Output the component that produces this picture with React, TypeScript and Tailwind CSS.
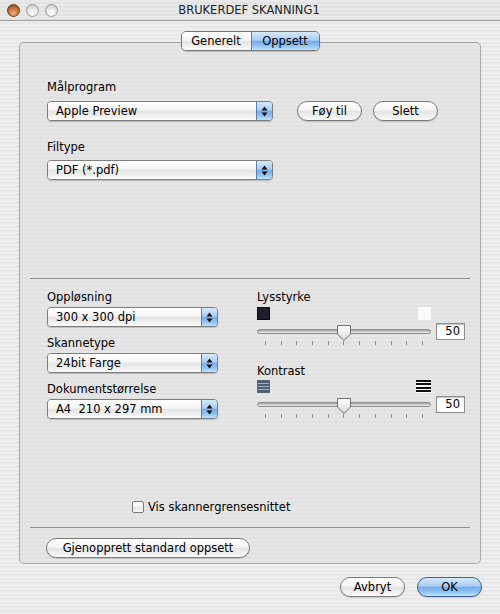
import React from 'react';

// Aqua-style gradients
const gloss = 'bg-[linear-gradient(180deg,#ffffff_0%,#f5f5f5_45%,#e4e4e4_52%,#f2f2f2_85%,#fdfdfd_100%)]';
const blue = 'bg-[linear-gradient(180deg,#d6e9fc_0%,#a9cdf3_45%,#74adee_52%,#93c6f6_80%,#c3e3fd_100%)]';

const TrafficLight = ({ red }: { red?: boolean }) => (
  <div
    className={
      red
        ? 'w-[13px] h-[13px] rounded-full border border-[#6b3a1c] bg-[radial-gradient(circle_at_50%_75%,#f0b27a_0%,#c0703a_55%,#7a3f1c_100%)]'
        : 'w-[13px] h-[13px] rounded-full border border-[#9a9a9a] bg-[radial-gradient(circle_at_50%_75%,#ffffff_0%,#e4e4e4_55%,#b9b9b9_100%)]'
    }
  />
);

const Arrows = () => (
  <svg width="7" height="11" viewBox="0 0 7 11">
    <path d="M3.5 0.5 L6.5 4.5 H0.5 Z" fill="#111" />
    <path d="M3.5 10.5 L6.5 6.5 H0.5 Z" fill="#111" />
  </svg>
);

const Popup = ({ label, width }: { label: string; width: string }) => (
  <div className={`flex h-[20px] ${width} rounded-[4px] border border-[#7d7d7d] overflow-hidden shadow-[0_1px_1px_rgba(0,0,0,0.18)]`}>
    <div className={`flex-1 ${gloss} pl-[8px] leading-[18px] whitespace-pre`}>{label}</div>
    <div className={`w-[16px] border-l border-[#5d7fab] ${blue} flex items-center justify-center`}>
      <Arrows />
    </div>
  </div>
);

const PillButton = ({ label, width, primary }: { label: string; width: string; primary?: boolean }) => (
  <div
    className={`h-[20px] ${width} rounded-full border ${
      primary ? `border-[#3d5f91] ${blue}` : `border-[#7b7b7b] ${gloss}`
    } flex items-center justify-center leading-[18px] shadow-[0_1px_1px_rgba(0,0,0,0.15)]`}
  >
    {label}
  </div>
);

const Slider = () => (
  <div className="flex items-center">
    <div className="relative w-[174px] h-[20px] flex items-center">
      <div className="w-full h-[5px] rounded-full border border-[#8f8f8f] bg-[linear-gradient(180deg,#9c9c9c_0%,#c9c9c9_50%,#ececec_100%)]" />
      <svg className="absolute left-[79px] top-[3px]" width="16" height="18" viewBox="0 0 16 18">
        <defs>
          <linearGradient id="thumb" x1="0" y1="0" x2="0" y2="1">
            <stop offset="0" stopColor="#ffffff" />
            <stop offset="0.5" stopColor="#eeeeee" />
            <stop offset="1" stopColor="#d6d6d6" />
          </linearGradient>
        </defs>
        <path d="M1.5 1.5 H14.5 V10 L8 16.5 L1.5 10 Z" fill="url(#thumb)" stroke="#707070" strokeWidth="1" />
      </svg>
    </div>
    <div className="ml-[5px] w-[29px] h-[17px] border border-[#8e8e8e] bg-white shadow-[inset_0_1px_1px_rgba(0,0,0,0.25)] text-right pr-[4px] leading-[15px]">
      50
    </div>
  </div>
);

const Ticks = () => (
  <div className="w-[174px] h-[5px] px-[8px] flex justify-between">
    {Array.from({ length: 11 }).map((_, i) => (
      <div key={i} className="w-px h-[4px] bg-[#8a8a8a]" />
    ))}
  </div>
);

export default function App() {
  return (
    <div className="w-[500px] h-[614px] flex flex-col overflow-hidden text-[11.5px] text-black font-['DejaVu_Sans','Liberation_Sans',sans-serif] bg-[repeating-linear-gradient(180deg,#eeeeee_0px,#eeeeee_2px,#e8e8e8_2px,#e8e8e8_4px)]">
      {/* title bar */}
      <div className="h-[21px] shrink-0 flex items-center border-b border-[#9d9d9d] bg-[repeating-linear-gradient(180deg,#e9e9e9_0px,#e9e9e9_2px,#e2e2e2_2px,#e2e2e2_4px)]">
        <div className="flex gap-[6px] pl-[7px]">
          <TrafficLight red />
          <TrafficLight />
          <TrafficLight />
        </div>
        <div className="flex-1 text-center pr-[60px] leading-[16px] text-[#222]">BRUKERDEF SKANNING1</div>
      </div>

      <div className="px-[19px] pt-[21px]">
        <div className="h-[522px] flex flex-col rounded-[5px] border border-[#a9a9a9] border-t-[#9f9f9f] bg-[repeating-linear-gradient(180deg,#e6e6e6_0px,#e6e6e6_2px,#e1e1e1_2px,#e1e1e1_4px)]">
          {/* tabs */}
          <div className="-mt-[12px] flex justify-center">
            <div className="flex h-[20px] rounded-[5px] border border-[#777] overflow-hidden shadow-[0_1px_1px_rgba(0,0,0,0.18)]">
              <div className={`w-[69px] ${gloss} flex items-center justify-center leading-[18px]`}>Generelt</div>
              <div className={`w-[68px] border-l border-[#5d7fab] ${blue} flex items-center justify-center leading-[18px]`}>Oppsett</div>
            </div>
          </div>

          {/* application / file type */}
          <div className="pl-[27px]">
            <div className="mt-[28px] leading-[16px]">Målprogram</div>
            <div className="mt-[6px] flex items-center">
              <Popup label="Apple Preview" width="w-[226px]" />
              <div className="ml-[24px]">
                <PillButton label="Føy til" width="w-[65px]" />
              </div>
              <div className="ml-[11px]">
                <PillButton label="Slett" width="w-[65px]" />
              </div>
            </div>
            <div className="mt-[18px] leading-[16px]">Filtype</div>
            <div className="mt-[5px]">
              <Popup label="PDF (*.pdf)" width="w-[226px]" />
            </div>
          </div>

          <div className="mt-[98px] mx-[10px] h-px bg-[#8e8e8e]" />

          {/* scan settings */}
          <div className="flex pl-[27px]">
            <div className="w-[210px]">
              <div className="mt-[10px] leading-[16px]">Oppløsning</div>
              <div className="mt-[2px]">
                <Popup label="300 x 300 dpi" width="w-[171px]" />
              </div>
              <div className="mt-[8px] leading-[16px]">Skannetype</div>
              <div className="mt-[2px]">
                <Popup label="24bit Farge" width="w-[171px]" />
              </div>
              <div className="mt-[8px] leading-[16px]">Dokumentstørrelse</div>
              <div className="mt-[2px]">
                <Popup label="A4  210 x 297 mm" width="w-[171px]" />
              </div>
            </div>

            <div>
              <div className="mt-[10px] leading-[16px]">Lysstyrke</div>
              <div className="mt-[2px] w-[174px] flex justify-between">
                <div className="w-[13px] h-[13px] bg-[#221e29] border border-[#0f0d12]" />
                <div className="w-[13px] h-[13px] bg-[#fafafa]" />
              </div>
              <div className="mt-[1px]">
                <Slider />
              </div>
              <Ticks />

              <div className="mt-[17px] leading-[16px]">Kontrast</div>
              <div className="mt-[1px] w-[174px] flex justify-between items-center">
                <div className="w-[13px] h-[13px] border border-[#56657a] bg-[repeating-linear-gradient(180deg,#4d5d73_0px,#4d5d73_2px,#a5b1bf_2px,#a5b1bf_3px)]" />
                <div className="w-[15px] h-[13px] bg-[repeating-linear-gradient(180deg,#111_0px,#111_2px,#ffffff_2px,#ffffff_3.5px)]" />
              </div>
              <div className="mt-[1px]">
                <Slider />
              </div>
              <Ticks />
            </div>
          </div>

          {/* bottom of panel */}
          <div className="mt-auto ml-[112px] h-[16px] flex items-center gap-[4px]">
            <div className={`w-[12px] h-[12px] rounded-[2px] border border-[#7d7d7d] ${gloss}`} />
            <span className="leading-[16px]">Vis skannergrensesnittet</span>
          </div>
          <div className="mt-[12px] mx-[10px] h-px bg-[#8e8e8e]" />
          <div className="mt-[10px] mb-[5px] ml-[26px]">
            <PillButton label="Gjenopprett standard oppsett" width="w-[204px]" />
          </div>
        </div>
      </div>

      <div className="pt-[13px] pr-[18px] flex justify-end gap-[12px]">
        <PillButton label="Avbryt" width="w-[65px]" />
        <PillButton label="OK" width="w-[65px]" primary />
      </div>
    </div>
  );
}
